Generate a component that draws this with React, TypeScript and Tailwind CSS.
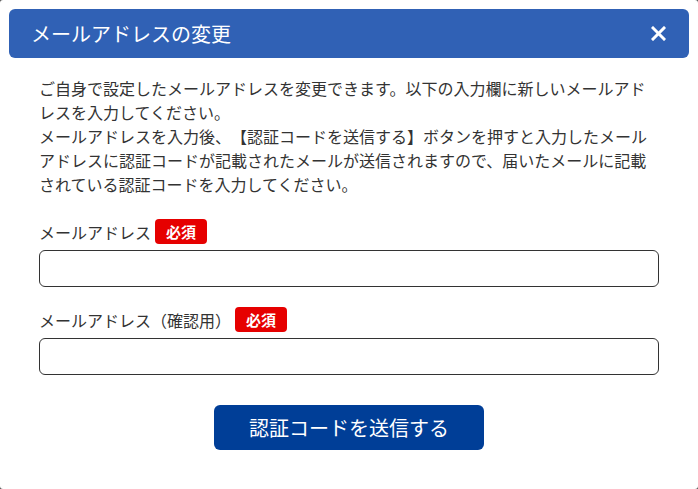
import React from "react";

const font = { fontFamily: '"Noto Sans CJK JP", "Noto Sans", sans-serif' };

function Badge() {
  return (
    <span className="inline-flex h-[25px] w-[52px] items-center justify-center rounded-[4px] bg-[#e60000] text-[15px] font-bold leading-none text-white">
      必須
    </span>
  );
}

export default function App() {
  return (
    <div className="h-[489px] w-[698px] bg-[#555]" style={font}>
      <div className="flex h-full w-full flex-col rounded-[3px] bg-white p-[9px]">
        <div className="flex h-[49px] items-center justify-between rounded-[6px] bg-[#3061b5] pl-[22px] pr-[22px]">
          <span className="text-[20px] leading-none text-white">メールアドレスの変更</span>
          <svg width="15" height="15" viewBox="0 0 15 15" className="mr-[1px]">
            <path d="M2 2 L13 13 M13 2 L2 13" stroke="white" strokeWidth="3" strokeLinecap="square" />
          </svg>
        </div>
        <div className="flex flex-col px-[30px] pt-[18px]">
          <p className="w-[610px] text-[16px] leading-[24px] text-[#333] [text-spacing-trim:space-all]">
            ご自身で設定したメールアドレスを変更できます。以下の入力欄に新しいメールアドレスを入力してください。
            <br />
            メールアドレスを入力後、【認証コードを送信する】ボタンを押すと入力したメールアドレスに認証コードが記載されたメールが送信されますので、届いたメールに記載されている認証コードを入力してください。
          </p>
          <div className="mt-[23px] flex items-center gap-[4px]">
            <span className="text-[16px] leading-none text-[#333]">メールアドレス</span>
            <Badge />
          </div>
          <div className="mt-[6px] h-[37px] w-full rounded-[6px] border border-[#333]" />
          <div className="mt-[20px] flex items-center gap-[4px]">
            <span className="text-[16px] leading-none text-[#333]">メールアドレス（確認用）</span>
            <Badge />
          </div>
          <div className="mt-[6px] h-[37px] w-full rounded-[6px] border border-[#333]" />
          <div className="mt-[30px] flex justify-center">
            <div className="flex h-[45px] w-[270px] items-center justify-center rounded-[6px] bg-[#003e97] text-[20px] leading-none text-white">
              認証コードを送信する
            </div>
          </div>
        </div>
      </div>
    </div>
  );
}
